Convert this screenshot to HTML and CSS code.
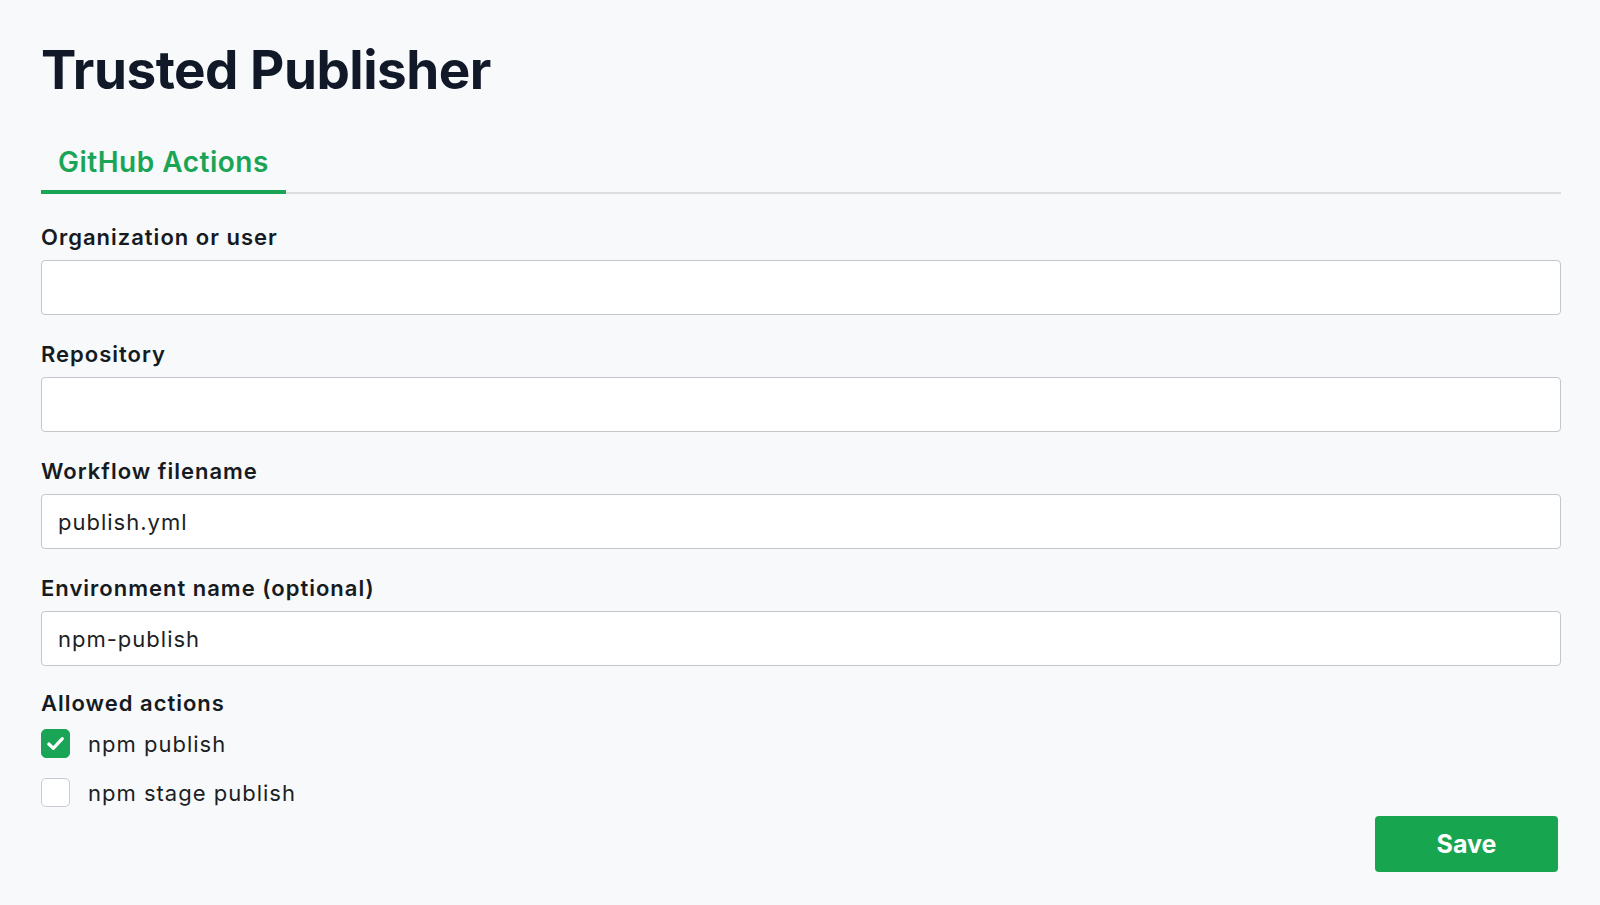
FILE: index.html
```html
<!DOCTYPE html>
<html lang="en">
<head>
<meta charset="utf-8">
<title>Trusted Publisher</title>
<link rel="stylesheet" href="styles.css">
</head>
<body>
<main class="page">
  <h1 class="title">Trusted Publisher</h1>
  <div class="tabs">
    <div class="tab tab-active">GitHub Actions</div>
  </div>
  <form class="form">
    <div class="field">
      <label class="label" for="org">Organization or user</label>
      <input class="input" id="org" type="text" value="">
    </div>
    <div class="field">
      <label class="label" for="repo">Repository</label>
      <input class="input" id="repo" type="text" value="">
    </div>
    <div class="field">
      <label class="label" for="wf">Workflow filename</label>
      <input class="input" id="wf" type="text" value="publish.yml">
    </div>
    <div class="field">
      <label class="label" for="env">Environment name (optional)</label>
      <input class="input" id="env" type="text" value="npm-publish">
    </div>
    <div class="actions">
      <div class="label">Allowed actions</div>
      <label class="check-row">
        <span class="box box-on">
          <svg class="tick" viewBox="0 0 29 29" width="29" height="29"><path d="M7.8 15 L12.3 19.3 L21.3 9.6" fill="none" stroke="#fff" stroke-width="3.2" stroke-linecap="round" stroke-linejoin="round"/></svg>
        </span>
        <span class="check-text">npm publish</span>
      </label>
      <label class="check-row">
        <span class="box"></span>
        <span class="check-text">npm stage publish</span>
      </label>
    </div>
    <div class="footer">
      <button class="save" type="button">Save</button>
    </div>
  </form>
</main>
</body>
</html>
```

FILE: styles.css
```css
* { box-sizing: border-box; }
html, body { margin: 0; padding: 0; }
body {
  background: #f7f9fb;
  font-family: Inter, "Noto Sans", sans-serif;
  color: #111827;
}
.page {
  padding: 34px 39px 0 41px;
}
.title {
  margin: 0;
  font-size: 53px;
  font-weight: 700;
  line-height: 72px;
  letter-spacing: -0.5px;
  color: #111827;
}
.tabs {
  margin-top: 38px;
  border-bottom: 2px solid #dcdfe2;
  display: flex;
}
.tab {
  padding: 0 17px 10px 17px;
  font-size: 28px;
  font-weight: 600;
  line-height: 36px;
  letter-spacing: 0.5px;
  margin-bottom: -2px;
}
.tab-active {
  color: #1aa556;
  border-bottom: 4px solid #1aa556;
  width: 245px;
}
.form {
  display: flex;
  flex-direction: column;
}
.field {
  display: flex;
  flex-direction: column;
  margin-top: 29px;
}
.field + .field { margin-top: 25px; }
.label {
  font-size: 22px;
  font-weight: 600;
  line-height: 28px;
  letter-spacing: 1px;
  color: #161b22;
}
.input {
  margin-top: 9px;
  height: 55px;
  border: 1.5px solid #c3c6ca;
  border-radius: 4px;
  background: #fff;
  padding: 0 16px;
  font-family: inherit;
  font-size: 22px;
  letter-spacing: 1px;
  color: #1b1f24;
  outline: none;
}
.actions {
  margin-top: 23px;
  display: flex;
  flex-direction: column;
}
.check-row {
  display: flex;
  align-items: center;
  gap: 18px;
  margin-top: 12px;
}
.check-row + .check-row { margin-top: 20px; }
.box {
  position: relative;
  width: 29px;
  height: 29px;
  border: 1.5px solid #c8cbcf;
  border-radius: 5px;
  background: #fff;
  flex: none;
}
.box-on {
  background: #1aa556;
  border-color: #1aa556;
}
.tick {
  position: absolute;
  left: -1.5px;
  top: -1.5px;
}
.check-text {
  font-size: 22px;
  letter-spacing: 1px;
  color: #1b1f24;
}
.footer {
  display: flex;
  justify-content: flex-end;
  margin-top: 9px;
}
.save {
  width: 183px;
  height: 56px;
  margin-right: 3px;
  border: none;
  border-radius: 4px;
  background: #17a550;
  color: #fff;
  font-family: inherit;
  font-size: 25px;
  font-weight: 700;
}
```
